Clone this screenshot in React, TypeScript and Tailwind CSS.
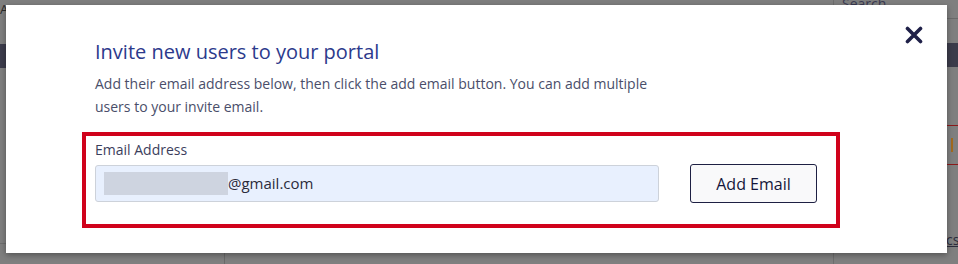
import React from 'react';

const CloseIcon: React.FC = () => (
    <svg width="18" height="18" viewBox="0 0 18 18" fill="none">
        <path d="M2.5 2.5 L15.5 15.5 M15.5 2.5 L2.5 15.5" stroke="#1f2048" strokeWidth="3.6" strokeLinecap="round" />
    </svg>
);

const BackdropPage: React.FC = () => (
    <div className="flex h-full w-full bg-[#7f7f7f] text-[#2b2b2b]">
        <div className="flex flex-1 flex-col">
            <div className="-mt-[9px] flex h-[28px] items-end gap-[78px] text-[13px] tracking-[1px] uppercase">
                <span>All Requests</span>
                <span>Documents</span>
                <span>All Tasks</span>
            </div>
            <div className="mt-[25px] h-[24px] bg-[#3c3c4b]" />
            <div className="flex-1" />
            <div className="flex h-[21px] border-t border-[#6e6e6e]">
                <div className="w-[225px] border-r border-[#6a6a6a]" />
            </div>
        </div>
        <div className="flex w-[125px] flex-col border-l border-[#6e6e6e]">
            <div className="-mt-[6px] h-[25px] border-b border-[#6a6a6a] pl-[8px] text-[14px] leading-[20px] text-[#3a3a52]">Search documents</div>
            <div className="mt-[24px] h-[24px] bg-[#3c3c4b]" />
            <div className="mt-[58px] flex h-[40px] items-center border-y border-[#8b1a1a] pl-[117px]">
                <span className="h-[14px] w-[2px] bg-[#a26a1e]" />
            </div>
            <div className="mt-[64px] pl-[112px] text-[14px] text-[#2b2b3b] underline">cs</div>
        </div>
    </div>
);

export default function App() {
    return (
        <div className="relative h-[264px] w-[958px] overflow-hidden" style={{ fontFamily: '"Open Sans", "Noto Sans", sans-serif' }}>
            <BackdropPage />
            <div className="absolute left-[6px] top-[5px] h-[248px] w-[941px] bg-white pl-[76px] pt-[33px] shadow-[0_2px_6px_rgba(0,0,0,0.35)]">
                <button className="absolute right-[20px] top-[17px] p-[4px]">
                    <CloseIcon />
                </button>
                <div className="pl-[13px]">
                    <h2 className="text-[20px] leading-[28px] text-[#2c3a8c]">Invite new users to your portal</h2>
                    <p className="mt-[6px] max-w-[580px] text-[14px] leading-[23px] text-[#4a4e6a]">
                        Add their email address below, then click the add email button. You can add multiple users to your invite email.
                    </p>
                </div>
                <div className="mt-[14px] h-[96px] w-[758px] border-[4px] border-[#d0021b] pl-[9px] pt-[4px]">
                    <label className="block text-[14px] leading-[20px] text-[#3b3e5c]">Email Address</label>
                    <div className="mt-[4px] flex items-center">
                        <div className="flex h-[37px] w-[564px] items-center rounded-[3px] border border-[#cdd2da] bg-[#e8f0fe] pl-[8px] text-[15px] text-[#2b2b3b]">
                            <span className="h-[23px] w-[124px] bg-[#ced4e0]" />
                            <span>@gmail.com</span>
                        </div>
                        <button className="ml-[31px] h-[39px] w-[127px] rounded-[3px] border border-[#1e2043] bg-[#f9f9fa] text-[16px] text-[#14163a]">
                            Add Email
                        </button>
                    </div>
                </div>
            </div>
        </div>
    );
}
